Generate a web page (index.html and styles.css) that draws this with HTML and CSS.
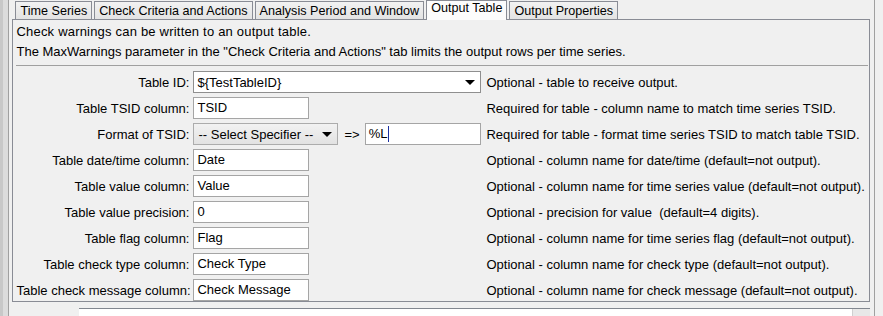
FILE: index.html
```html
<!DOCTYPE html>
<html lang="en">
<head>
    <meta charset="UTF-8">
    <title>Check Time Series - Output Table</title>
    <link rel="stylesheet" href="styles.css">
</head>
<body>
    <div class="window">
        <div class="edge"></div>
        <div class="main">
            <div class="tabs">
                <div class="tab">Time Series</div>
                <div class="tab">Check Criteria and Actions</div>
                <div class="tab">Analysis Period and Window</div>
                <div class="tab selected">Output Table</div>
                <div class="tab">Output Properties</div>
            </div>
            <div class="tab-panel">
                <div class="notes">
                    <p class="first">Check warnings can be written to an output table.</p>
                    <p>The MaxWarnings parameter in the "Check Criteria and Actions" tab limits the output rows per time series.</p>
                </div>
                <div class="form">
                    <label>Table ID:</label>
                    <div class="combo editable">
                        <span class="combo-text">${TestTableID}</span>
                        <span class="arrow"></span>
                    </div>
                    <div class="desc">Optional - table to receive output.</div>

                    <label>Table TSID column:</label>
                    <div class="field">TSID</div>
                    <div class="desc">Required for table - column name to match time series TSID.</div>

                    <label>Format of TSID:</label>
                    <div class="format-row">
                        <div class="combo button">
                            <span class="combo-text">-- Select Specifier --</span>
                            <span class="arrow"></span>
                        </div>
                        <span class="arrow-text">=&gt;</span>
                        <div class="field wide">%L<span class="caret"></span></div>
                    </div>
                    <div class="desc">Required for table - format time series TSID to match table TSID.</div>

                    <label>Table date/time column:</label>
                    <div class="field">Date</div>
                    <div class="desc">Optional - column name for date/time (default=not output).</div>

                    <label>Table value column:</label>
                    <div class="field">Value</div>
                    <div class="desc">Optional - column name for time series value (default=not output).</div>

                    <label>Table value precision:</label>
                    <div class="field">0</div>
                    <div class="desc">Optional - precision for value &nbsp;(default=4 digits).</div>

                    <label>Table flag column:</label>
                    <div class="field">Flag</div>
                    <div class="desc">Optional - column name for time series flag (default=not output).</div>

                    <label>Table check type column:</label>
                    <div class="field">Check Type</div>
                    <div class="desc">Optional - column name for check type (default=not output).</div>

                    <label>Table check message column:</label>
                    <div class="field">Check Message</div>
                    <div class="desc">Optional - column name for check message (default=not output).</div>
                </div>
            </div>
            <div class="command-box">
                <div class="cmd-cell"></div>
                <div class="cmd-cell"></div>
                <div class="cmd-cell last"></div>
                <div class="cmd-scroll"></div>
            </div>
        </div>
        <div class="side"></div>
    </div>
</body>
</html>
```

FILE: styles.css
```css
body {
    margin: 0;
    padding: 0;
    background-color: #f0f0f0;
    font-family: 'Liberation Sans', Arial, sans-serif;
    font-size: 13px;
    color: #000;
    overflow: hidden;
}
.window {
    display: flex;
    height: 316px;
}
.edge {
    width: 9px;
    background: linear-gradient(90deg, #c8c8c8 0, #c8c8c8 3px, #dcdcdc 3px);
    border-right: 1px solid #a0a0a0;
}
.main {
    width: 858px;
    margin-left: 3px;
}
.side {
    margin-left: 4px;
    width: 8px;
    border-left: 1px solid #a0a0a0;
}
.tabs {
    display: flex;
    align-items: flex-start;
    gap: 2px;
    padding-left: 3px;
    height: 19px;
    font-size: 12.6px;
}
.tab {
    margin-top: 1px;
    height: 18px;
    line-height: 18px;
    padding: 0 4px;
    box-sizing: border-box;
    border: 1px solid #898c95;
    border-bottom: none;
    background: linear-gradient(#f2f2f2, #e3e3e3);
    white-space: nowrap;
}
.tab.selected {
    position: relative;
    z-index: 1;
    margin-top: 0;
    height: 20px;
    line-height: 15px;
    background: #fcfcfc;
}
.tab-panel {
    border: 1px solid #898c95;
    height: 283px;
    box-sizing: border-box;
    padding-bottom: 2px;
}
.notes {
    padding: 2px 0 0 3px;
}
.notes p {
    margin: 0;
    line-height: 20px;
}
.notes p.first {
    letter-spacing: 0.2px;
}
.form {
    margin: 3px 1px 0 3px;
    border-top: 1px solid #a0a0a0;
    padding-top: 5px;
    display: grid;
    grid-template-columns: 173px 288px auto;
    grid-auto-rows: 22px;
    column-gap: 4px;
    row-gap: 4px;
    align-items: center;
}
.form label {
    text-align: right;
    white-space: nowrap;
}
.desc {
    padding-left: 1px;
    white-space: nowrap;
}
.field {
    width: 116px;
    height: 22px;
    box-sizing: border-box;
    border: 1px solid #a5a5a5;
    background-color: #fff;
    padding-left: 3px;
    line-height: 20px;
}
.field.wide {
    flex: 1;
    width: auto;
}
.caret {
    display: inline-block;
    width: 1px;
    height: 16px;
    margin-left: 1px;
    vertical-align: -4px;
    background-color: #1a2ea0;
}
.combo {
    height: 22px;
    box-sizing: border-box;
    border: 1px solid #8f8f8f;
    display: flex;
    align-items: center;
    justify-content: space-between;
    padding: 0 5px 0 3px;
}
.combo.editable {
    background-color: #fff;
}
.combo.button {
    width: 145px;
    border-color: #acacac;
    background: linear-gradient(#f2f2f2, #e2e2e2);
    padding-left: 4px;
}
.arrow {
    width: 0;
    height: 0;
    border-left: 5px solid transparent;
    border-right: 5px solid transparent;
    border-top: 5px solid #000;
}
.format-row {
    display: flex;
    align-items: center;
}
.arrow-text {
    margin: 0 5px 0 6px;
}
.command-box {
    display: flex;
    margin: 6px 0 0 67px;
    height: 8px;
    border-top: 1px solid #828790;
}
.cmd-cell {
    background-color: #fff;
    width: 253px;
}
.cmd-cell.last {
    width: 303px;
}
.cmd-scroll {
    width: 18px;
    background-color: #e8e8e8;
    border-left: 1px solid #d0d0d0;
}
```
